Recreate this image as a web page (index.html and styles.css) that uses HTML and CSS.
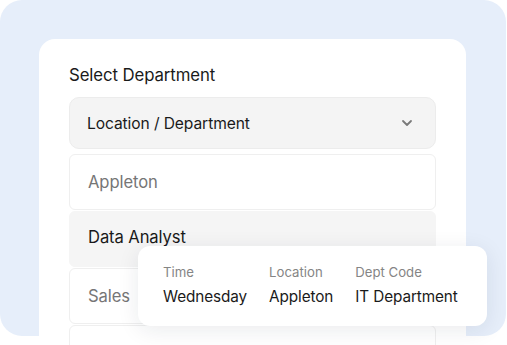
FILE: index.html
```html
<!DOCTYPE html>
<html lang="en">
<head>
<meta charset="UTF-8">
<title>Select Department</title>
<link rel="stylesheet" href="styles.css">
</head>
<body>
  <div class="panel">
    <div class="card">
      <div class="label">Select Department</div>
      <div class="select">
        <span>Location / Department</span>
        <svg class="chevron" width="12" height="8" viewBox="0 0 12 8">
          <path d="M2 2l4 4 4-4" fill="none" stroke="#7a7a7a" stroke-width="1.8" stroke-linecap="round" stroke-linejoin="round"/>
        </svg>
      </div>
      <div class="list">
        <div class="item muted">Appleton</div>
        <div class="item active">Data Analyst</div>
        <div class="item muted">Sales</div>
        <div class="item muted">Operations</div>
      </div>

      <div class="tooltip">
        <div class="col">
          <div class="cap">Time</div>
          <div class="val">Wednesday</div>
        </div>
        <div class="col">
          <div class="cap">Location</div>
          <div class="val">Appleton</div>
        </div>
        <div class="col">
          <div class="cap">Dept Code</div>
          <div class="val">IT Department</div>
        </div>
      </div>
    </div>
  </div>
</body>
</html>
```

FILE: styles.css
```css
body {
  margin: 0;
  background: #fff;
  font-family: Inter, "Noto Sans", sans-serif;
  color: #1a1a1a;
  overflow: hidden;
  height: 345px;
}

.panel {
  width: 506px;
  height: 336px;
  box-sizing: border-box;
  padding: 39px 0 0 39px;
  background: #e6eefa;
  border-radius: 22px;
}

.card {
  position: relative;
  width: 427px;
  height: 340px;
  box-sizing: border-box;
  padding: 26px 30px 0;
  background: #fff;
  border-radius: 16px;
}

.label {
  font-size: 16.8px;
  line-height: 20px;
  letter-spacing: -0.1px;
  margin-bottom: 12px;
}

.select {
  display: flex;
  align-items: center;
  justify-content: space-between;
  height: 52px;
  box-sizing: border-box;
  padding: 0 22px 0 17px;
  background: #f4f4f4;
  border: 1px solid #ececec;
  border-radius: 10px;
  font-size: 15.6px;
  letter-spacing: -0.1px;
}

.chevron {
  display: block;
}

.list {
  display: flex;
  flex-direction: column;
  gap: 1px;
  margin-top: 5px;
}

.item {
  height: 56px;
  box-sizing: border-box;
  display: flex;
  align-items: center;
  padding: 0 18px;
  border: 1px solid #efefef;
  border-radius: 6px;
  font-size: 16.6px;
  letter-spacing: -0.1px;
  background: #fff;
}

.item.muted {
  color: #767676;
}

.item.active {
  background: #f5f5f5;
  border-color: #f5f5f5;
  color: #1a1a1a;
  padding-bottom: 4px;
}

.tooltip {
  position: absolute;
  left: 99px;
  top: 207px;
  width: 349px;
  height: 80px;
  box-sizing: border-box;
  padding: 18px 20px 0 25px;
  display: flex;
  gap: 22px;
  background: #fff;
  border-radius: 12px;
  box-shadow: 0 4px 22px rgba(20, 30, 60, 0.09);
}

.cap {
  font-size: 13.2px;
  line-height: 16px;
  color: #858585;
  margin-bottom: 8px;
}

.val {
  font-size: 15.3px;
  line-height: 18px;
  color: #1a1a1a;
  letter-spacing: -0.1px;
}
```
